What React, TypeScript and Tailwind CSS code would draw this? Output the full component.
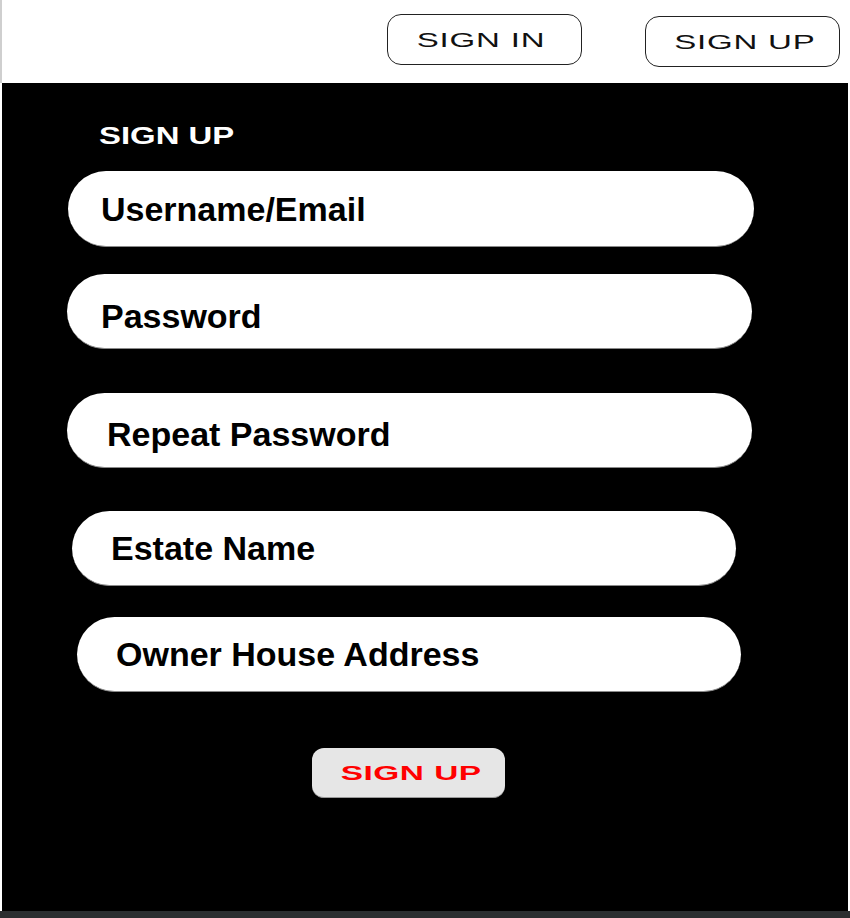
import React from 'react'

const fields = [
  { label: 'Username/Email', box: 'ml-[66px] w-[686px] h-[76px] mt-[23px] pl-[33px] pt-[2px]' },
  { label: 'Password', box: 'ml-[65px] w-[685px] h-[75px] mt-[27px] pl-[34px] pt-[10px]' },
  { label: 'Repeat Password', box: 'ml-[65px] w-[685px] h-[75px] mt-[44px] pl-[40px] pt-[8px]' },
  { label: 'Estate Name', box: 'ml-[70px] w-[664px] h-[75px] mt-[43px] pl-[39px]' },
  { label: 'Owner House Address', box: 'ml-[75px] w-[664px] h-[75px] mt-[31px] pl-[39px]' },
]

export default function App() {
  return (
    <div className="w-[850px] h-[918px] flex flex-col bg-white font-['Liberation_Sans',Arial,sans-serif]">
      {/* top nav */}
      <div className="h-[83px] shrink-0 border-l-2 border-[#cfcfcf] flex items-start pl-[385px] pt-[14px]">
        <button className="w-[195px] h-[51px] rounded-[14px] border border-[#222] bg-white flex items-center justify-center pr-[8px] text-[20px] text-[#111]">
          <span className="inline-block scale-x-[1.65] tracking-[0.5px]">SIGN IN</span>
        </button>
        <button className="ml-[63px] mt-[2px] w-[195px] h-[51px] rounded-[14px] border border-[#222] bg-white flex items-center justify-center text-[20px] text-[#111] pl-[5px]">
          <span className="inline-block scale-x-[1.65] tracking-[0.5px]">SIGN UP</span>
        </button>
      </div>

      {/* form panel */}
      <div className="h-[828px] shrink-0 mx-[2px] bg-black flex flex-col items-start pt-[42px]">
        <h2 className="ml-[97px] text-[23px] leading-[23px] font-bold text-white">
          <span className="inline-block origin-left scale-x-[1.43]">SIGN UP</span>
        </h2>

        {fields.map(f => (
          <input
            key={f.label}
            placeholder={f.label}
            className={`${f.box} shrink-0 rounded-full bg-white border-b border-[#8a8a8a] outline-none text-[34px] font-bold text-black placeholder:text-black`}
          />
        ))}

        <button className="ml-[310px] mt-[56px] w-[193px] h-[50px] rounded-[12px] bg-[#e6e6e6] border-b border-[#9a9a9a] flex items-center justify-center pl-[6px] text-[20px] font-bold text-[#ff0000]">
          <span className="inline-block scale-x-[1.67] tracking-[0.3px]">SIGN UP</span>
        </button>
      </div>

      <div className="flex-1 bg-[#2b2e30]" />
    </div>
  )
}
